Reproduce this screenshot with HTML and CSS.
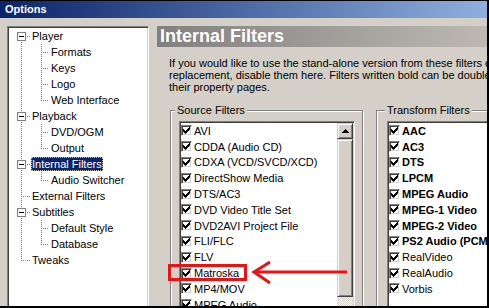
FILE: index.html
```html
<!DOCTYPE html>
<html lang="en">
<head>
    <meta charset="UTF-8">
    <title>Options</title>
    <link rel="stylesheet" href="styles.css">
</head>
<body>
    <div class="window">
        <div class="titlebar">Options</div>

        <div class="client">
            <!-- arbre des pages -->
            <div class="tree">
                <div class="node first"><span class="toggle"></span><span class="label">Player</span></div>
                <div class="node child"><span class="label">Formats</span></div>
                <div class="node child"><span class="label">Keys</span></div>
                <div class="node child"><span class="label">Logo</span></div>
                <div class="node child last-child"><span class="label">Web Interface</span></div>
                <div class="node"><span class="toggle"></span><span class="label">Playback</span></div>
                <div class="node child"><span class="label">DVD/OGM</span></div>
                <div class="node child last-child"><span class="label">Output</span></div>
                <div class="node"><span class="toggle"></span><span class="label selected">Internal Filters</span></div>
                <div class="node child last-child"><span class="label">Audio Switcher</span></div>
                <div class="node leaf"><span class="label">External Filters</span></div>
                <div class="node"><span class="toggle"></span><span class="label">Subtitles</span></div>
                <div class="node child"><span class="label">Default Style</span></div>
                <div class="node child last-child"><span class="label">Database</span></div>
                <div class="node leaf last"><span class="label">Tweaks</span></div>
            </div>

            <!-- page de droite -->
            <div class="page">
                <div class="page-head">Internal Filters</div>
                <p class="intro">If you would like to use the stand-alone version from these filters or any other<br>replacement, disable them here. Filters written bold can be double-clicked to open<br>their property pages.</p>

                <div class="groups">
                    <div class="group group-source">
                        <div class="group-title">Source Filters</div>
                        <div class="listbox">
                            <ul class="items">
                                <li><span class="check"><svg width="7" height="7"><use href="#tick"/></svg></span>AVI</li>
                                <li><span class="check"><svg width="7" height="7"><use href="#tick"/></svg></span>CDDA (Audio CD)</li>
                                <li><span class="check"><svg width="7" height="7"><use href="#tick"/></svg></span>CDXA (VCD/SVCD/XCD)</li>
                                <li><span class="check"><svg width="7" height="7"><use href="#tick"/></svg></span>DirectShow Media</li>
                                <li><span class="check"><svg width="7" height="7"><use href="#tick"/></svg></span>DTS/AC3</li>
                                <li><span class="check"><svg width="7" height="7"><use href="#tick"/></svg></span>DVD Video Title Set</li>
                                <li><span class="check"><svg width="7" height="7"><use href="#tick"/></svg></span>DVD2AVI Project File</li>
                                <li><span class="check"><svg width="7" height="7"><use href="#tick"/></svg></span>FLI/FLC</li>
                                <li><span class="check"><svg width="7" height="7"><use href="#tick"/></svg></span>FLV</li>
                                <li><span class="check"><svg width="7" height="7"><use href="#tick"/></svg></span>Matroska</li>
                                <li><span class="check"><svg width="7" height="7"><use href="#tick"/></svg></span>MP4/MOV</li>
                                <li><span class="check"><svg width="7" height="7"><use href="#tick"/></svg></span>MPEG Audio</li>
                                <li><span class="check"><svg width="7" height="7"><use href="#tick"/></svg></span>MPEG PS/TS/PVA</li>
                            </ul>
                            <div class="vscroll">
                                <div class="sb-btn"><svg width="7" height="4"><path d="M3 0h1v1h1v1h1v1h1v1H0V3h1V2h1V1h1z"/></svg></div>
                                <div class="sb-thumb"></div>
                            </div>
                        </div>
                    </div>

                    <div class="group group-transform">
                        <div class="group-title">Transform Filters</div>
                        <div class="listbox">
                            <ul class="items">
                                <li class="bold"><span class="check"><svg width="7" height="7"><use href="#tick"/></svg></span>AAC</li>
                                <li class="bold"><span class="check"><svg width="7" height="7"><use href="#tick"/></svg></span>AC3</li>
                                <li class="bold"><span class="check"><svg width="7" height="7"><use href="#tick"/></svg></span>DTS</li>
                                <li class="bold"><span class="check"><svg width="7" height="7"><use href="#tick"/></svg></span>LPCM</li>
                                <li class="bold"><span class="check"><svg width="7" height="7"><use href="#tick"/></svg></span>MPEG Audio</li>
                                <li class="bold"><span class="check"><svg width="7" height="7"><use href="#tick"/></svg></span>MPEG-1 Video</li>
                                <li class="bold"><span class="check"><svg width="7" height="7"><use href="#tick"/></svg></span>MPEG-2 Video</li>
                                <li class="bold"><span class="check"><svg width="7" height="7"><use href="#tick"/></svg></span>PS2 Audio (PCM/ADPCM)</li>
                                <li><span class="check"><svg width="7" height="7"><use href="#tick"/></svg></span>RealVideo</li>
                                <li><span class="check"><svg width="7" height="7"><use href="#tick"/></svg></span>RealAudio</li>
                                <li><span class="check"><svg width="7" height="7"><use href="#tick"/></svg></span>Vorbis</li>
                            </ul>
                        </div>
                    </div>
                </div>
            </div>
        </div>

        <!-- annotation rouge par-dessus la capture -->
        <svg class="markup" width="489" height="308" viewBox="0 0 489 308">
            <rect x="169.5" y="265.5" width="76" height="14" fill="none" stroke="#ee1111" stroke-width="3"/>
            <line x1="254" y1="272" x2="347" y2="272" stroke="#ee1111" stroke-width="3"/>
            <polyline points="270,262 254,272 270,283" fill="none" stroke="#ee1111" stroke-width="3"/>
        </svg>
    </div>

    <svg class="defs" width="0" height="0">
        <symbol id="tick" viewBox="0 0 7 7">
            <path d="M0 2h1v3H0zM1 3h1v3H1zM2 4h1v3H2zM3 3h1v3H3zM4 2h1v3H4zM5 1h1v3H5zM6 0h1v3H6z"/>
        </symbol>
    </svg>
</body>
</html>
```

FILE: styles.css
```css
* {
    box-sizing: border-box;
}

body {
    margin: 0;
    background-color: #d4d0c8;
    font-family: "Liberation Sans", Arial, sans-serif;
    font-size: 11px;
    color: #000;
}

/* Fenetre complete */
.window {
    position: relative;
    width: 489px;
    height: 308px;
    border-top: 1px solid #000;
    border-right: 2px solid #000;
    border-bottom: 2px solid #000;
    background-color: #d4d0c8;
    overflow: hidden;
    display: flex;
    flex-direction: column;
}

.titlebar {
    flex: none;
    height: 17px;
    line-height: 17px;
    padding-left: 5px;
    background: linear-gradient(to right, #0a246a, #8eb0de);
    color: #fff;
    font-weight: bold;
}

.client {
    flex: 1;
    min-height: 0;
    display: flex;
    gap: 8px;
    padding: 8px 0 0 7px;
    overflow: hidden;
}

/* Arbre a gauche */
.tree {
    --dv: repeating-linear-gradient(#808080 0 1px, transparent 1px 2px);
    --dh: repeating-linear-gradient(to right, #808080 0 1px, transparent 1px 2px);
    flex: none;
    width: 142px;
    height: 300px;
    padding: 1px;
    background-color: #fff;
    border: 1px solid;
    border-color: #808080 #fff #fff #808080;
    box-shadow: inset 1px 1px #404040, inset -1px -1px #d4d0c8;
}

.node {
    height: 16px;
    display: flex;
    align-items: flex-start;
    padding-left: 8px;
    white-space: nowrap;
    background-repeat: no-repeat;
    background-image: var(--dh), var(--dv);
    background-size: 10px 1px, 1px 16px;
    background-position: 12px 8px, 12px 0;
}

.node.first {
    background-size: 10px 1px, 1px 8px;
    background-position: 12px 8px, 12px 8px;
}

.node.last {
    background-size: 10px 1px, 1px 9px;
}

.node.leaf {
    padding-left: 22px;
}

.node.child {
    padding-left: 41px;
    background-image: var(--dh), var(--dv), var(--dv);
    background-size: 8px 1px, 1px 16px, 1px 16px;
    background-position: 32px 8px, 32px 0, 12px 0;
}

.node.child.last-child {
    background-size: 8px 1px, 1px 9px, 1px 16px;
}

.toggle {
    flex: none;
    width: 9px;
    height: 9px;
    margin-top: 4px;
    border: 1px solid #808080;
    background: linear-gradient(#000, #000) center / 5px 1px no-repeat #fff;
}

.label {
    height: 14px;
    line-height: 14px;
    margin-top: 1px;
    padding: 0 1px;
}

.toggle + .label {
    margin-left: 5px;
}

.label.selected {
    background-color: #0a246a;
    color: #fff;
    outline: 1px dotted #c8c4a0;
    outline-offset: -1px;
}

/* Page de droite */
.page {
    flex: 1;
    min-width: 0;
    overflow: hidden;
}

.page-head {
    height: 21px;
    line-height: 21px;
    padding-left: 3px;
    background: linear-gradient(to right, #808080, #bdb9b1);
    color: #fff;
    font-size: 18px;
    font-weight: bold;
    white-space: nowrap;
}

.intro {
    margin: 10px 0 0 12px;
    line-height: 12px;
    white-space: nowrap;
}

.groups {
    display: flex;
    align-items: flex-start;
    margin-top: 17px;
    padding-left: 13px;
}

.group {
    flex: none;
    height: 220px;
    border: 1px solid #808080;
    box-shadow: inset 1px 1px #fff, 1px 1px #fff;
}

.group-source {
    width: 193px;
    padding: 0 7px 0 8px;
}

.group-transform {
    width: 200px;
    margin-left: 13px;
    padding: 0 0 0 10px;
}

.group-title {
    display: table;
    margin: -7px 0 0 -4px;
    padding: 0 2px;
    line-height: 13px;
    background-color: #d4d0c8;
    white-space: nowrap;
}

.group-transform .group-title {
    margin-left: -2px;
}

.listbox {
    display: flex;
    height: 200px;
    margin-top: 4px;
    padding: 1px;
    background-color: #fff;
    border: 1px solid;
    border-color: #808080 #fff #fff #808080;
    box-shadow: inset 1px 1px #404040, inset -1px -1px #d4d0c8;
}

.items {
    flex: 1;
    min-width: 0;
    list-style: none;
    margin: 0;
    padding: 0;
}

.items li {
    height: 15.8px;
    display: flex;
    align-items: center;
    white-space: nowrap;
}

.items li.bold {
    font-weight: bold;
}

.check {
    flex: none;
    width: 11px;
    height: 11px;
    margin-right: 2px;
    padding: 1px;
    border: 1px solid;
    border-color: #808080 #fff #fff #808080;
    box-shadow: inset 1px 1px #404040, inset -1px -1px #d4d0c8;
    background-color: #fff;
}

.check svg {
    display: block;
    fill: #000;
    shape-rendering: crispEdges;
}

/* Barre de defilement */
.vscroll {
    flex: none;
    width: 16px;
    display: flex;
    flex-direction: column;
    background: repeating-conic-gradient(#fff 0 25%, #d4d0c8 0 50%) 0 0 / 2px 2px;
}

.sb-btn,
.sb-thumb {
    background-color: #d4d0c8;
    border: 1px solid;
    border-color: #d4d0c8 #404040 #404040 #d4d0c8;
    box-shadow: inset 1px 1px #fff, inset -1px -1px #808080;
}

.sb-btn {
    height: 16px;
    display: flex;
    align-items: center;
    justify-content: center;
}

.sb-btn svg {
    display: block;
    fill: #000;
    shape-rendering: crispEdges;
}

.sb-thumb {
    height: 158px;
}

/* Annotation par-dessus */
.markup {
    position: absolute;
    top: -1px;
    left: 0;
}

.defs {
    display: block;
}
```
